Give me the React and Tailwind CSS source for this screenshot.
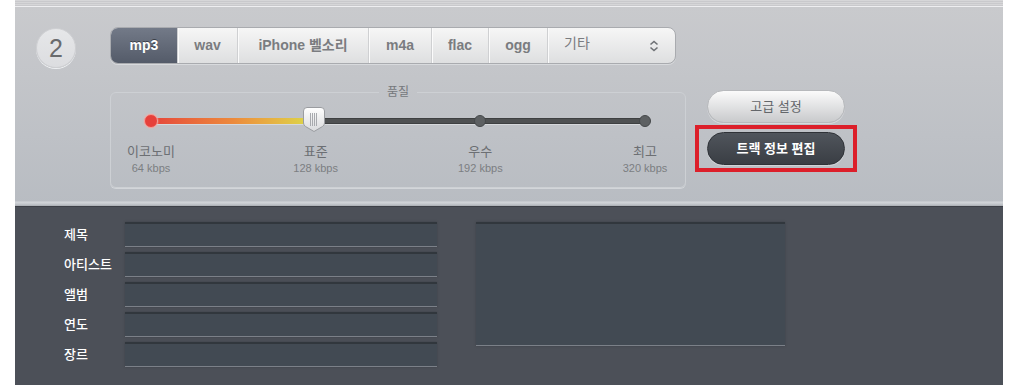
import React from 'react'

const FONT = { fontFamily: '"Liberation Sans", "Noto Sans CJK KR", sans-serif' }

const FORMATS = [
  { name: 'mp3', w: 'w-[66px]' },
  { name: 'wav', w: 'w-[60px]' },
  { name: 'iPhone 벨소리', w: 'w-[131px]' },
  { name: 'm4a', w: 'w-[63px]' },
  { name: 'flac', w: 'w-[57px]' },
  { name: 'ogg', w: 'w-[59px]' }
]

const LEVELS = [
  { label: '이코노미', rate: '64 kbps' },
  { label: '표준', rate: '128 kbps' },
  { label: '우수', rate: '192 kbps' },
  { label: '최고', rate: '320 kbps' }
]

const FIELDS = ['제목', '아티스트', '앨범', '연도', '장르']

function Handle() {
  return (
    <svg width="22" height="25" viewBox="0 0 22 25">
      <defs>
        <linearGradient id="hg" x1="0" y1="0" x2="0" y2="1">
          <stop offset="0" stopColor="#ffffff" />
          <stop offset="1" stopColor="#d9dadc" />
        </linearGradient>
      </defs>
      <path d="M4 0.5 H18 Q21.5 0.5 21.5 4 V16 Q21.5 18 19.5 19.5 L11 24.5 L2.5 19.5 Q0.5 18 0.5 16 V4 Q0.5 0.5 4 0.5 Z" fill="url(#hg)" stroke="#9a9ca0" />
      {[7.5, 9.5, 11.5, 13.5].map((x) => (
        <line key={x} x1={x} y1="6" x2={x} y2="19" stroke="#a8aaae" strokeWidth="1" />
      ))}
    </svg>
  )
}

function UpDown() {
  return (
    <svg width="10" height="12" viewBox="0 0 10 12">
      <path d="M1.5 4.5 L5 1.5 L8.5 4.5" fill="none" stroke="#6f7276" strokeWidth="1.6" />
      <path d="M1.5 7.5 L5 10.5 L8.5 7.5" fill="none" stroke="#6f7276" strokeWidth="1.6" />
    </svg>
  )
}

export default function App() {
  return (
    <div className="w-[1020px] h-[387px] bg-white overflow-hidden" style={FONT}>
      <div className="ml-[15px] w-[988px] flex flex-col">
        {/* top stripe */}
        <div className="h-[7px] bg-[repeating-linear-gradient(to_bottom,#d6d6d8_0px,#d6d6d8_1px,#c9c9cc_1px,#c9c9cc_2px)] border-b border-b-[#eeeef0]" />

        {/* gray settings area */}
        <div className="h-[199px] flex flex-col bg-gradient-to-b from-[#c9cacd] to-[#b8bcc2]">
          <div className="flex-1 flex items-start pt-[20px]">
            <div className="ml-[21px] mt-[1px] w-[40px] h-[40px] rounded-full bg-gradient-to-b from-[#e6e7e9] to-[#dcdde0] border border-[#cfd0d3] shadow-[0_1px_0_#eef0f2] flex items-center justify-center text-[25px] leading-none text-[#696b6e]">
              2
            </div>

            <div className="ml-[34px] flex flex-col">
              {/* format selector */}
              <div className="flex h-[37px] w-[566px] rounded-[8px] bg-gradient-to-b from-[#f6f6f6] to-[#dedfe0] border border-[#a9abaf] shadow-[0_1px_0_#d8dadd]">
                {FORMATS.map((f, i) => (
                  <div
                    key={f.name}
                    className={
                      i === 0
                        ? `${f.w} flex items-center justify-center rounded-l-[7px] bg-gradient-to-b from-[#737a88] to-[#545b69] text-white font-bold text-[14px] [text-shadow:0_-1px_0_#3b4049]`
                        : `${f.w} flex items-center justify-center border-l border-l-[#cfd0d2] shadow-[inset_1px_0_0_#fbfbfb] text-[#7a7c80] font-bold text-[14px]`
                    }
                  >
                    {f.name}
                  </div>
                ))}
                <div className="flex-1 flex items-center border-l border-l-[#cfd0d2] shadow-[inset_1px_0_0_#fbfbfb] pl-[16px] pr-[16px] text-[#7a7c80] text-[14px]">
                  <span className="-mt-[4px]">기타</span>
                  <span className="ml-auto">
                    <UpDown />
                  </span>
                </div>
              </div>

              <div className="flex items-start mt-[21px]">
                {/* quality box */}
                <fieldset className="w-[576px] h-[103px] shrink-0 border border-[#cdd0d4] rounded-[6px] shadow-[0_1px_0_#d3d6da]">
                  <legend className="mx-auto px-[8px] text-[12px] leading-[14px] text-[#75787c]">품질</legend>
                  <div className="px-[40px]">
                    <div className="relative mt-[15px] h-[13px] flex items-center">
                      <div className="absolute left-0 right-0 top-[4px] h-[6px] rounded-full bg-[#4f5152] border-y border-[#3e4041] shadow-[0_1px_0_#d6d8db]" />
                      <div className="absolute left-0 w-[165px] top-[4px] h-[6px] rounded-l-full bg-gradient-to-r from-[#e5423a] via-[#ec8a3c] to-[#d8dc4a]" />
                      <div className="relative flex-1 flex justify-between items-center">
                        <div className="w-0 flex justify-center">
                          <div className="w-[14px] h-[14px] shrink-0 rounded-full bg-[#e6403b] border border-[#f3a09b] shadow-[0_0_2px_#f6b0aa]" />
                        </div>
                        <div className="w-0" />
                        <div className="w-0 flex justify-center">
                          <div className="w-[12px] h-[12px] shrink-0 rounded-full bg-[#5d6062] border border-[#45484a]" />
                        </div>
                        <div className="w-0 flex justify-center">
                          <div className="w-[12px] h-[12px] shrink-0 rounded-full bg-[#5d6062] border border-[#45484a]" />
                        </div>
                      </div>
                      <div className="absolute left-[152px] -top-[7px]">
                        <Handle />
                      </div>
                    </div>

                    <div className="mt-[17px] flex justify-between">
                      {LEVELS.map((l) => (
                        <div key={l.label} className="w-0 flex justify-center">
                          <div className="whitespace-nowrap text-center">
                            <div className="text-[13px] leading-[16px] text-[#6c6f73]">{l.label}</div>
                            <div className="text-[11px] leading-[14px] text-[#7b7e82] mt-[1px]">{l.rate}</div>
                          </div>
                        </div>
                      ))}
                    </div>
                  </div>
                </fieldset>

                {/* buttons */}
                <div className="ml-[9px] mt-[5px] flex flex-col">
                  <div className="ml-[12px] w-[138px] h-[33px] rounded-full bg-gradient-to-b from-[#fbfbfb] to-[#c9cacc] border border-[#b7b9bc] shadow-[0_1px_0_#d8dadd] flex items-center justify-center text-[13px] text-[#63666a]">
                    고급 설정
                  </div>
                  <div className="mt-[2px] w-[162px] h-[47px] border-[4px] border-[#dc1f2a] pl-[8px] pt-[3px]">
                    <div className="w-[138px] h-[33px] rounded-full bg-gradient-to-b from-[#50555c] to-[#3a3e44] border border-[#2f3237] shadow-[0_1px_0_#cfd2d6] flex items-center justify-center text-[13px] font-bold text-white">
                      트랙 정보 편집
                    </div>
                  </div>
                </div>
              </div>
            </div>
          </div>
          <div className="h-[5px] bg-[linear-gradient(to_bottom,#b9bdc3_0px,#d3d6da_1px,#c4c8cd_3px,#a9adb3_5px)]" />
        </div>

        {/* track info area */}
        <div className="h-[179px] bg-[#4c5058] border-t border-t-[#3d4047] flex pt-[15px]">
          <div className="ml-[49px] flex flex-col gap-[5px]">
            {FIELDS.map((f) => (
              <div key={f} className="h-[25px] flex items-center">
                <div className="w-[61px] text-[13px] font-medium text-white">{f}</div>
                <div className="w-[312px] h-[25px] bg-[#424a53] border-t-2 border-t-[#31373d] border-b border-b-[#7b8088] shadow-[0_0_2px_#3c4047]" />
              </div>
            ))}
          </div>
          <div className="ml-[39px] w-[309px] h-[124px] bg-[#424a53] border-t-2 border-t-[#31373d] border-b border-b-[#7b8088] shadow-[0_0_2px_#3c4047]" />
        </div>
      </div>
    </div>
  )
}
